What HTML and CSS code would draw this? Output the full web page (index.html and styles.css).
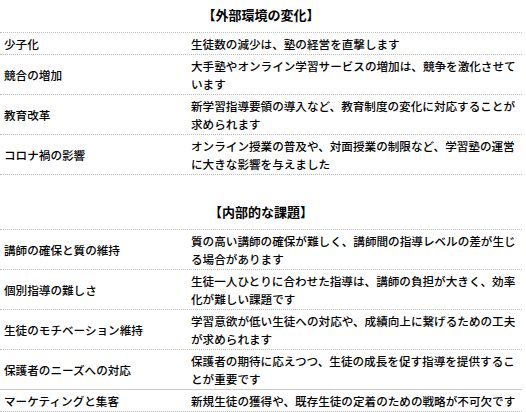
FILE: index.html
```html
<!DOCTYPE html>
<html lang="ja">
<head>
<meta charset="utf-8">
<link rel="stylesheet" href="styles.css">
</head>
<body>
<section class="section">
  <h2 class="title">【外部環境の変化】</h2>
  <div class="table">
    <div class="row"><div class="key">少子化</div><div class="val">生徒数の減少は、塾の経営を直撃します</div></div>
    <div class="row"><div class="key">競合の増加</div><div class="val">大手塾やオンライン学習サービスの増加は、競争を激化させています</div></div>
    <div class="row"><div class="key">教育改革</div><div class="val">新学習指導要領の導入など、教育制度の変化に対応することが求められます</div></div>
    <div class="row"><div class="key">コロナ禍の影響</div><div class="val">オンライン授業の普及や、対面授業の制限など、学習塾の運営に大きな影響を与えました</div></div>
  </div>
</section>
<section class="section second">
  <h2 class="title">【内部的な課題】</h2>
  <div class="table">
    <div class="row"><div class="key">講師の確保と質の維持</div><div class="val">質の高い講師の確保が難しく、講師間の指導レベルの差が生じる場合があります</div></div>
    <div class="row"><div class="key">個別指導の難しさ</div><div class="val">生徒一人ひとりに合わせた指導は、講師の負担が大きく、効率化が難しい課題です</div></div>
    <div class="row"><div class="key">生徒のモチベーション維持</div><div class="val">学習意欲が低い生徒への対応や、成績向上に繋げるための工夫が求められます</div></div>
    <div class="row solid-bottom"><div class="key">保護者のニーズへの対応</div><div class="val">保護者の期待に応えつつ、生徒の成長を促す指導を提供することが重要です</div></div>
    <div class="row"><div class="key">マーケティングと集客</div><div class="val">新規生徒の獲得や、既存生徒の定着のための戦略が不可欠です</div></div>
  </div>
</section>
</body>
</html>
```

FILE: styles.css
```css
html, body {
  margin: 0;
  padding: 0;
  background: #fff;
}
body {
  font-family: "Noto Sans CJK JP", "Noto Sans", sans-serif;
  color: #000;
  width: 522px;
}
.section.second {
  margin-top: 22px;
}
.title {
  margin: 0;
  padding: 6px 0 8px;
  font-size: 13px;
  line-height: 18px;
  font-weight: bold;
  text-align: center;
}
.table {
  border-top: 1px dotted #bdbdbd;
}
.row {
  display: grid;
  grid-template-columns: 187px 1fr;
  border-bottom: 1px dotted #bdbdbd;
}
.row.solid-bottom {
  border-bottom: 1px solid #cccccc;
}
.key, .val {
  padding: 1.5px 4px;
  font-size: 11.6px;
  line-height: 18px;
  font-weight: 500;
}
.key {
  align-self: center;
}
```
